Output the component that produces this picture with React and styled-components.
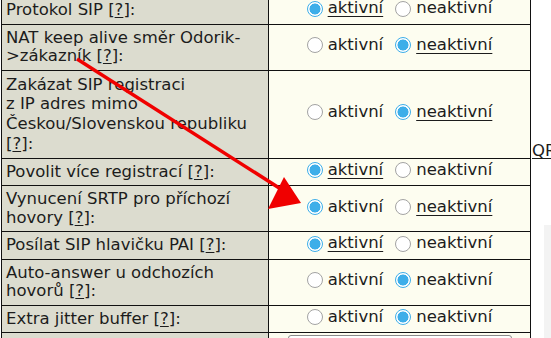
import React from 'react';
import styled, { createGlobalStyle } from 'styled-components';

const GlobalStyle = createGlobalStyle`
  html, body {
    margin: 0;
    padding: 0;
    background: #fff;
    overflow: hidden;
  }
  body {
    font-family: "DejaVu Sans", Verdana, sans-serif;
    color: #1c1c1c;
  }
`;

const rows = [
  { label: 'Protokol SIP', value: 'on', under: 'on' },
  { label: 'NAT keep alive směr Odorik->zákazník', value: 'off', under: 'off', nat: true },
  {
    label: ['Zakázat SIP registraci', 'z IP adres mimo', 'Českou/Slovenskou republiku'],
    value: 'off',
    under: 'off',
  },
  { label: 'Povolit více registrací', value: 'on', under: 'on' },
  { label: 'Vynucení SRTP pro příchozí hovory', value: 'on', under: 'off' },
  { label: 'Posílat SIP hlavičku PAI', value: 'on', under: 'on' },
  { label: 'Auto-answer u odchozích hovorů', value: 'off', under: null },
  { label: 'Extra jitter buffer', value: 'off', under: null },
];

function Radio({ checked }) {
  return <RadioDot $checked={checked} />;
}

function Help() {
  return (
    <>
      {' '}[<HelpLink>?</HelpLink>]:
    </>
  );
}

function Label({ row }) {
  if (Array.isArray(row.label)) {
    return (
      <>
        {row.label.map((l) => (
          <React.Fragment key={l}>
            {l}
            <br />
          </React.Fragment>
        ))}
        [<HelpLink>?</HelpLink>]:
      </>
    );
  }
  if (row.nat) {
    return (
      <>
        NAT keep alive směr Odorik-
        <br />
        &gt;zákazník
        <Help />
      </>
    );
  }
  return (
    <>
      {row.label}
      <Help />
    </>
  );
}

function App() {
  return (
    <Page>
      <GlobalStyle />
      <Main>
        <Table>
          <tbody>
            {rows.map((row, i) => (
              <tr key={i}>
                <LabelCell $loose={Array.isArray(row.label)}>
                  <Label row={row} />
                </LabelCell>
                <ValueCell>
                  <Choices>
                    <Choice>
                      <Radio checked={row.value === 'on'} />
                      <ChoiceText $under={row.under === 'on'}>aktivní</ChoiceText>
                    </Choice>
                    <Choice>
                      <Radio checked={row.value === 'off'} />
                      <ChoiceText $under={row.under === 'off'}>neaktivní</ChoiceText>
                    </Choice>
                  </Choices>
                </ValueCell>
              </tr>
            ))}
            <tr>
              <LabelCell>&nbsp;</LabelCell>
              <ValueCell>
                <TextBox />
              </ValueCell>
            </tr>
          </tbody>
        </Table>
        <Side>
          <QrLink>QR</QrLink>
          <SidePanel />
        </Side>
      </Main>

      <Arrow width="551" height="338" viewBox="0 0 551 338">
        <line x1="77" y1="59" x2="287" y2="193" stroke="#f00000" strokeWidth="3.5" />
        <polygon points="301,203 268,209 284,177" fill="#f00000" />
      </Arrow>
    </Page>
  );
}

export default App;

const Page = styled.div`
  position: relative;
  width: 551px;
  height: 338px;
  overflow: hidden;
`;

const Main = styled.div`
  display: flex;
  align-items: flex-start;
  padding-left: 1px;
  margin-top: -4px;
`;

const Table = styled.table`
  border-collapse: collapse;
  width: 530px;
  font-size: 16.5px;
  line-height: 18.5px;
  flex-shrink: 0;

  td {
    border: 1px solid #111;
  }
`;

const LabelCell = styled.td`
  width: 258px;
  background: #dcdccf;
  padding: 4px 4px;
  line-height: ${(p) => (p.$loose ? '19.75px' : '18.5px')};
  vertical-align: top;
`;

const ValueCell = styled.td`
  background: #fdfdf0;
  padding: 2px 2px;
  vertical-align: middle;
  text-align: center;
`;

const HelpLink = styled.span`
  text-decoration: underline;
  text-underline-offset: 2px;
`;

const Choices = styled.div`
  display: inline-flex;
  align-items: center;
  gap: 12px;
`;

const Choice = styled.label`
  display: inline-flex;
  align-items: center;
  gap: 5px;
`;

const RadioDot = styled.span`
  display: inline-block;
  box-sizing: border-box;
  width: 16px;
  height: 16px;
  border-radius: 50%;
  border: 1px solid ${(p) => (p.$checked ? '#3daee9' : '#a3a3a3')};
  background: ${(p) =>
    p.$checked
      ? 'radial-gradient(circle, #3daee9 0 5.2px, #ffffff 5.8px)'
      : '#fff'};
`;

const ChoiceText = styled.span`
  text-decoration: ${(p) => (p.$under ? 'underline' : 'none')};
  text-underline-offset: 3px;
`;

const TextBox = styled.div`
  width: 222px;
  height: 26px;
  margin: 0 auto;
  border: 1px solid #8a8a8a;
  border-radius: 3px;
  background: #fff;
`;

const Side = styled.div`
  display: flex;
  flex-direction: column;
  padding-top: 145px;
  font-size: 16.5px;
  line-height: 19px;
`;

const QrLink = styled.span`
  padding-left: 1px;
  text-decoration: underline;
  text-underline-offset: 2px;
  white-space: nowrap;
`;

const SidePanel = styled.div`
  margin-left: 13px;
  margin-top: 65px;
  width: 20px;
  height: 120px;
  background: #f3f3f3;
`;

const Arrow = styled.svg`
  position: absolute;
  left: 0;
  top: 0;
  pointer-events: none;
`;
